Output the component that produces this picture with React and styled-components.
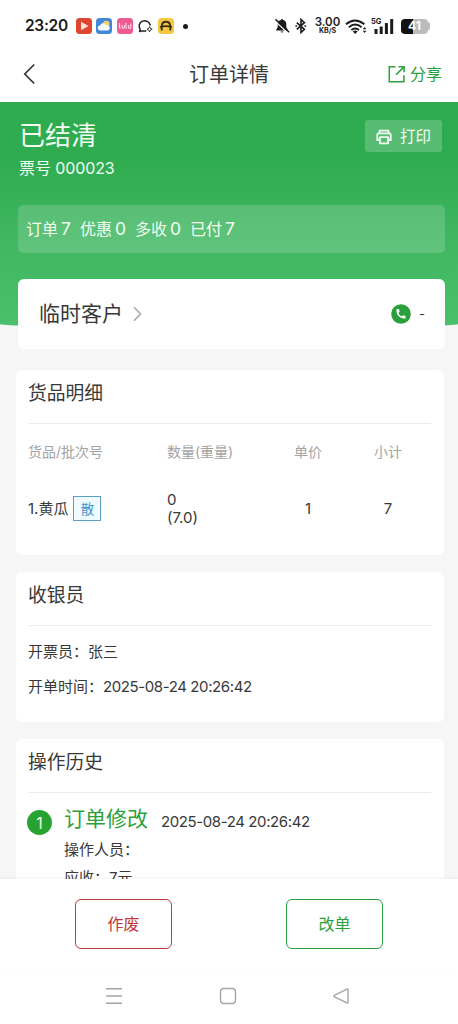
import React from "react";
import styled, { createGlobalStyle } from "styled-components";

const GREEN = "#2a9f3c";

const GlobalStyle = createGlobalStyle`
  * { box-sizing: border-box; }
  body {
    margin: 0;
    background: #f6f6f6;
    color: #383838;
    font-family: Inter, "Noto Sans CJK SC", sans-serif;
  }
`;

const Screen = styled.div`
  display: flex;
  flex-direction: column;
  width: 458px;
  height: 1024px;
  overflow: hidden;
`;

const Text = styled.span`
  font-size: ${(p) => p.$size || 15}px;
  line-height: ${(p) => p.$line || 20}px;
  letter-spacing: ${(p) => p.$track || 0}px;
  font-weight: ${(p) => p.$weight || 400};
  color: ${(p) => p.$color || "inherit"};
  white-space: pre;
`;

/* status bar */
const StatusBar = styled.header`
  display: flex;
  flex: none;
  align-items: center;
  justify-content: space-between;
  height: 52px;
  padding: 0 28px 0 25px;
  background: #fff;
  color: #1b1b1b;
`;

const StatusGroup = styled.div`
  display: flex;
  align-items: center;
  gap: ${(p) => p.$gap}px;
`;

const Clock = styled(Text)`
  width: 46px;
`;

const MoreDot = styled.span`
  width: 5px;
  height: 5px;
  margin-left: 5px;
  border-radius: 50%;
  background: #1b1b1b;
`;

const Speed = styled.div`
  display: flex;
  flex-direction: column;
  align-items: center;
  width: 25px;
  margin: 0 0 0 3px;
`;

const Signal = styled.div`
  position: relative;
  width: 22px;
  height: 17px;
`;

const SignalLabel = styled(Text)`
  position: absolute;
  left: -1px;
  top: 0;
`;

const Battery = styled.div`
  display: flex;
  align-items: center;
  justify-content: center;
  width: 27px;
  height: 15px;
  border-radius: 4px;
  background: linear-gradient(90deg, #111 0 44%, #bcbcbc 44%);
  color: #fff;
`;

const BatteryWrap = styled.div`
  display: flex;
  align-items: center;
  margin-left: 2px;
  &::after {
    content: "";
    width: 2px;
    height: 8px;
    border-radius: 0 2px 2px 0;
    background: #bcbcbc;
  }
`;

/* title bar */
const TitleBar = styled.nav`
  display: grid;
  grid-template-columns: 1fr auto 1fr;
  flex: none;
  align-items: center;
  height: 50px;
  padding: 0 16px 6px 22px;
  background: #fff;
`;

const PageTitle = styled.h1`
  margin: 2px 6px 0 0;
  font-size: 20px;
  line-height: 28px;
  font-weight: 400;
`;

const Share = styled.div`
  display: flex;
  align-items: center;
  justify-content: flex-end;
  gap: 4px;
  color: ${GREEN};
`;

/* scrolling area */
const Content = styled.main`
  flex: 1;
  min-height: 0;
  overflow: hidden;
`;

const Hero = styled.section`
  height: 226px;
  padding: 17px 13px 0 18px;
  color: #f1fcf3;
  background: linear-gradient(180deg, #2fab4f 0, #30ac50 60px, #43b864 150px, #4abf6c 226px);
  border-radius: 0 0 50% 50% / 0 0 4px 4px;
`;

const HeroTop = styled.div`
  display: flex;
  align-items: flex-start;
  justify-content: space-between;
  height: 86px;
`;

const HeroTitles = styled.div`
  display: flex;
  flex-direction: column;
  padding-left: 1px;
`;

const PrintButton = styled.button`
  display: flex;
  align-items: center;
  justify-content: center;
  gap: 8px;
  width: 77px;
  height: 32px;
  margin: 1px 3px 0 0;
  padding: 1px 0 0;
  border: 0;
  border-radius: 3px;
  color: #f1fcf3;
  font-family: inherit;
  background: rgba(255, 255, 255, 0.2);
`;

const Summary = styled.div`
  display: flex;
  align-items: center;
  gap: 9px;
  height: 48px;
  padding-left: 8px;
  border-radius: 5px;
  background: rgba(255, 255, 255, 0.16);
`;

const Card = styled.section`
  height: ${(p) => p.$height}px;
  margin: 0 14px 17px 16px;
  padding: 0 13px 0 12px;
  border-radius: 6px;
  background: #fff;
`;

const CustomerCard = styled.section`
  display: flex;
  align-items: center;
  justify-content: space-between;
  position: relative;
  height: 70px;
  margin: -49px 13px 21px 18px;
  padding: 0 20px 0 21px;
  border-radius: 6px;
  background: #fff;
`;

const Inline = styled.div`
  display: flex;
  align-items: center;
  gap: ${(p) => p.$gap || 0}px;
`;

const CardTitle = styled.h2`
  height: 54px;
  margin: 0;
  padding-top: 12px;
  border-bottom: 1px solid #ececec;
  font-size: 18.8px;
  line-height: 24px;
  font-weight: 400;
`;

const GoodsRow = styled.div`
  display: grid;
  grid-template-columns: 139px 101px 80px 80px;
  align-items: center;
  height: ${(p) => p.$height}px;
`;

const Centered = styled.div`
  display: flex;
  justify-content: center;
`;

const Quantity = styled.div`
  display: flex;
  flex-direction: column;
`;

const BulkTag = styled.span`
  display: flex;
  align-items: center;
  justify-content: center;
  width: 28px;
  height: 25px;
  border: 1.5px solid #5a9fc9;
  background: #f0fbff;
  color: #4a94cf;
  font-size: 13.5px;
  line-height: 20px;
`;

const InfoLine = styled.div`
  display: flex;
  align-items: center;
  height: 35px;
`;

const InfoList = styled.div`
  padding-top: 8px;
`;

const HistoryItem = styled.div`
  display: flex;
  gap: 12px;
  padding-top: 11px;
`;

const StepNumber = styled.div`
  display: flex;
  align-items: center;
  justify-content: center;
  width: 25px;
  height: 25px;
  margin: 6px 0 0 -1px;
  border-radius: 50%;
  background: #26a331;
  color: #f1fcf3;
`;

const HistoryBody = styled.div`
  display: flex;
  flex-direction: column;
`;

const HistoryTime = styled(Text)`
  padding-top: 5px;
`;

/* actions and system navigation */
const ActionBar = styled.footer`
  display: flex;
  flex: none;
  justify-content: space-between;
  height: 90px;
  padding: 20px 75px 0;
  background: #fff;
  box-shadow: 0 -1px 3px rgba(0, 0, 0, 0.05);
  position: relative;
`;

const ActionButton = styled.button`
  width: 97px;
  height: 50px;
  padding: 0 0 3px;
  border: 1.5px solid ${(p) => p.$color};
  border-radius: 6px;
  background: #fff;
  color: ${(p) => p.$color};
  font-family: inherit;
  font-size: 16px;
`;

const SystemNav = styled.div`
  display: flex;
  flex: none;
  justify-content: space-between;
  height: 55px;
  padding: 18px 108px 0 105px;
  background: #fff;
`;

const VideoIcon = () => (
  <svg width="16" height="16" viewBox="0 0 16 16">
    <rect width="16" height="16" rx="3.5" fill="#df4632" />
    <path d="M5 3.8v8.4L12.5 8z" fill="#ffe3d8" />
  </svg>
);

const WeatherIcon = () => (
  <svg width="16" height="16" viewBox="0 0 16 16">
    <rect width="16" height="16" rx="3.5" fill="#4387d8" />
    <circle cx="10.3" cy="6" r="3.2" fill="#f4d06a" />
    <path d="M4.3 12.5a2.5 2.5 0 0 1-.2-5 3.2 3.2 0 0 1 6-.3 2.7 2.7 0 0 1 1.6 5.3z" fill="#f4faff" />
  </svg>
);

const PinkIcon = () => (
  <svg width="16" height="16" viewBox="0 0 16 16">
    <rect width="16" height="16" rx="3.5" fill="#ee5a91" />
    <path d="M2.5 5v4.5q0 .8 1 .8M5 7v2q0 1.3 1.2 1.3T7.4 9V7M9 5v4.5q0 .8 1 .8M11.5 7v2q0 1.3 1.2 1.3T13.8 9V5.5" fill="none" stroke="#ffd5e4" strokeWidth="1.2" />
  </svg>
);

const ChatIcon = () => (
  <svg width="16" height="16" viewBox="0 0 16 16" fill="none" stroke="#222" strokeWidth="1.5">
    <path d="M8.8 12.9H4.6l-2 .6.6-2.2A5.6 5.4 0 1 1 13.2 7" strokeLinecap="round" strokeLinejoin="round" />
    <path d="m12.6 8.6.8 1.8 1.8.8-1.8.8-.8 1.8-.8-1.8-1.8-.8 1.8-.8z" strokeWidth=".9" />
  </svg>
);

const HelmetIcon = () => (
  <svg width="16" height="16" viewBox="0 0 16 16">
    <rect width="16" height="16" rx="3.5" fill="#f3c943" />
    <path d="M3.7 12.6V8.4Q4 3.8 8 3.8t4.3 4.6v4.2" fill="none" stroke="#3d2d12" strokeWidth="1.9" />
    <path d="M2.2 9.2q5.8-2.2 11.6 0" fill="none" stroke="#3d2d12" strokeWidth="1.9" />
  </svg>
);

const BellOffIcon = () => (
  <svg width="16" height="16" viewBox="0 0 16 16">
    <path d="M8 1a1 1 0 0 0-1 1 4.3 4.3 0 0 0-3.3 4.3v3L2.2 11.8v.8h11.6v-.8l-1.5-2.5v-3A4.3 4.3 0 0 0 9 2a1 1 0 0 0-1-1zM6.4 13.4a1.7 1.7 0 0 0 3.2 0z" fill="#1b1b1b" />
    <path d="M.6 2.6 13.8 15" stroke="#fff" strokeWidth="1.2" />
    <path d="M1.5 1.4 15.2 14.2" stroke="#1b1b1b" strokeWidth="1.5" />
  </svg>
);

const BluetoothIcon = () => (
  <svg width="12" height="16" viewBox="0 0 12 16">
    <path d="m1.8 4.6 7.6 6.7L6 14.5v-13l3.4 3.2-7.6 6.7" fill="none" stroke="#1b1b1b" strokeWidth="1.6" />
    <path d="M.4 8h1.8M9.4 8h1.8" stroke="#1b1b1b" strokeWidth="1.7" />
  </svg>
);

const WifiIcon = () => (
  <svg width="22" height="17" viewBox="0 0 22 17">
    <g fill="none" stroke="#1b1b1b" strokeWidth="1.9">
      <path d="M1 6.2q9-7.6 18.4 0" />
      <path d="M3.8 9.2q6.4-5.2 12.8 0" />
      <path d="M6.4 12q3.8-3 7.6 0" />
    </g>
    <path d="M7.8 13.4q2.4-1.7 4.8 0l-2.4 2.7z" fill="#1b1b1b" />
    <path d="m19.6 9 1.8 2.3h-3.6zM19.6 15l1.8-2.3h-3.6z" fill="#1b1b1b" />
  </svg>
);

const BarsIcon = () => (
  <svg width="22" height="17" viewBox="0 0 22 17" fill="#1b1b1b">
    <rect x="2.5" y="11" width="3" height="5" rx=".6" />
    <rect x="7.7" y="8.5" width="3" height="7.5" rx=".6" />
    <rect x="12.9" y="5" width="3" height="11" rx=".6" />
    <rect x="18.2" y="1" width="3" height="15" rx=".6" />
  </svg>
);

const BackIcon = () => (
  <svg width="14" height="22" viewBox="0 0 14 22">
    <path d="M12.2 1.5 2.8 11l9.4 9.5" fill="none" stroke="#333" strokeWidth="1.7" />
  </svg>
);

const ShareIcon = () => (
  <svg width="18" height="18" viewBox="0 0 18 18" fill="none" stroke={GREEN} strokeWidth="1.5">
    <path d="M7.5 1.8H1.3v14.9h14.6v-6.4M10.5 1.8h5.6v5.4M15.8 2.1 8 9.8" />
  </svg>
);

const PrinterIcon = () => (
  <svg width="16" height="16" viewBox="0 0 16 16" fill="none" stroke="#f1fcf3" strokeWidth="1.8" strokeLinejoin="round">
    <path d="M3.5 4.5V1.6h9v2.9M3.7 11.2H1.3V5.6q0-1.3 1.3-1.3h10.8q1.3 0 1.3 1.3v5.6h-2.4" />
    <path d="M3.9 8.1h8.2v6.2H3.9z" />
  </svg>
);

const PhoneIcon = () => (
  <svg width="20" height="20" viewBox="0 0 20 20">
    <circle cx="10" cy="10" r="9.8" fill={GREEN} />
    <path d="M5.3 5.7q0-.6.6-.6h1.7q.5 0 .6.5l.4 1.9q0 .4-.3.6l-.9.9q1 2.3 3.3 3.4l1-.9q.3-.3.6-.2l1.8.5q.5.1.5.6v1.7q0 .6-.6.6-8.4-.4-8.7-9z" fill="#f4fff5" />
  </svg>
);

const ChevronIcon = () => (
  <svg width="9" height="16" viewBox="0 0 9 16">
    <path d="m1 1.3 6.5 6.7L1 14.7" fill="none" stroke="#aaa" strokeWidth="1.6" />
  </svg>
);

const NavIcon = ({ d }) => (
  <svg width="18" height="18" viewBox="0 0 18 18">
    <path d={d} fill="none" stroke="#a6a6a6" strokeWidth="1.4" strokeLinejoin="round" />
  </svg>
);

const totals = [["订单", "7"], ["优惠", "0"], ["多收", "0"], ["已付", "7"]];

export default function App() {
  return (
    <Screen>
      <GlobalStyle />
      <StatusBar>
        <StatusGroup $gap={4.5}>
          <Clock $size={15.5} $weight={600} $track={-0.3}>23:20</Clock>
          <VideoIcon />
          <WeatherIcon />
          <PinkIcon />
          <ChatIcon />
          <HelmetIcon />
          <MoreDot />
        </StatusGroup>
        <StatusGroup $gap={5}>
          <BellOffIcon />
          <BluetoothIcon />
          <Speed>
            <Text $size={11.5} $line={10} $weight={600}>3.00</Text>
            <Text $size={7} $line={8} $weight={700}>KB/S</Text>
          </Speed>
          <WifiIcon />
          <Signal>
            <BarsIcon />
            <SignalLabel $size={7.5} $line={7} $weight={700}>5G</SignalLabel>
          </Signal>
          <BatteryWrap>
            <Battery><Text $size={12} $line={14} $weight={700}>41</Text></Battery>
          </BatteryWrap>
        </StatusGroup>
      </StatusBar>
      <TitleBar>
        <BackIcon />
        <PageTitle>订单详情</PageTitle>
        <Share><ShareIcon /><Text $size={16}>分享</Text></Share>
      </TitleBar>
      <Content>
        <Hero>
          <HeroTop>
            <HeroTitles>
              <Text $size={26} $line={34}>已结清</Text>
              <Text $size={16} $line={30} $track={-0.1}>票号 000023</Text>
            </HeroTitles>
            <PrintButton><PrinterIcon /><Text $size={15.5}>打印</Text></PrintButton>
          </HeroTop>
          <Summary>
            {totals.map(([label, value]) => (
              <Inline key={label} $gap={3}>
                <Text $size={16}>{label}</Text>
                <Text $size={17.5}>{value}</Text>
              </Inline>
            ))}
          </Summary>
        </Hero>
        <CustomerCard>
          <Inline $gap={10}><Text $size={21} $line={28}>临时客户</Text><ChevronIcon /></Inline>
          <Inline $gap={8}><PhoneIcon /><Text $size={13}>-</Text></Inline>
        </CustomerCard>
        <Card $height={185}>
          <CardTitle>货品明细</CardTitle>
          <GoodsRow $height={56}>
            <Text $size={14} $color="#a3a3a3">货品/批次号</Text>
            <Text $size={14} $color="#a3a3a3">数量(重量)</Text>
            <Centered><Text $size={14} $color="#a3a3a3">单价</Text></Centered>
            <Centered><Text $size={14} $color="#a3a3a3">小计</Text></Centered>
          </GoodsRow>
          <GoodsRow $height={57}>
            <Inline $gap={5}><Text $size={15}>1.黄瓜</Text><BulkTag>散</BulkTag></Inline>
            <Quantity><Text $line={18}>0</Text><Text $line={18}>(7.0)</Text></Quantity>
            <Centered><Text>1</Text></Centered>
            <Centered><Text>7</Text></Centered>
          </GoodsRow>
        </Card>
        <Card $height={150}>
          <CardTitle>收银员</CardTitle>
          <InfoList>
            <InfoLine><Text>开票员：张三</Text></InfoLine>
            <InfoLine><Text>开单时间：</Text><Text $track={-0.4}>2025-08-24 20:26:42</Text></InfoLine>
          </InfoList>
        </Card>
        <Card $height={220}>
          <CardTitle>操作历史</CardTitle>
          <HistoryItem>
            <StepNumber><Text $size={16}>1</Text></StepNumber>
            <HistoryBody>
              <Inline $gap={13}>
                <Text $size={21} $line={30} $color={GREEN}>订单修改</Text>
                <HistoryTime $track={-0.4}>2025-08-24 20:26:42</HistoryTime>
              </Inline>
              <Text $line={31}>操作人员：</Text>
              <Text $line={26}>应收：7元</Text>
            </HistoryBody>
          </HistoryItem>
        </Card>
      </Content>
      <ActionBar>
        <ActionButton $color="#c0393b">作废</ActionButton>
        <ActionButton $color={GREEN}>改单</ActionButton>
      </ActionBar>
      <SystemNav>
        <NavIcon d="M1 1.7h16M1 9h16M1 16.3h16" />
        <NavIcon d="M5 1.5h8q3.5 0 3.5 3.5v8q0 3.5-3.5 3.5H5q-3.5 0-3.5-3.5V5q0-3.5 3.5-3.5z" />
        <NavIcon d="M15 2.2q1-.5 1 .7v12.3q0 1.2-1 .7L2.5 9.9q-1-.8 0-1.5z" />
      </SystemNav>
    </Screen>
  );
}
